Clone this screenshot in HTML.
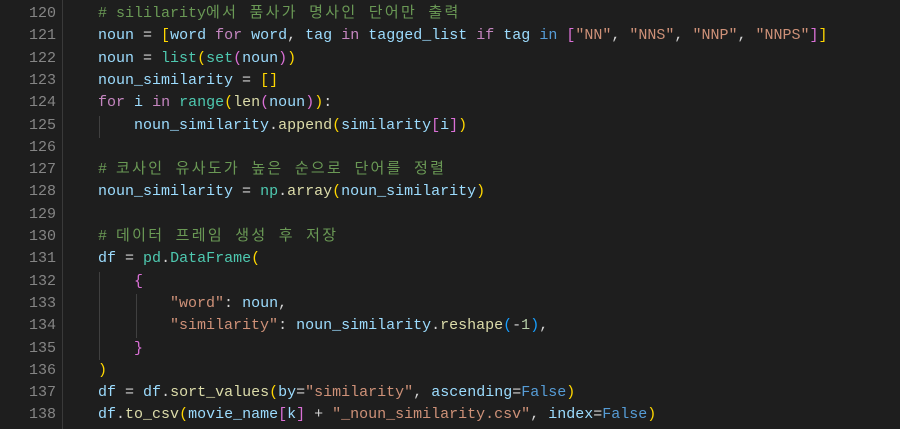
<!DOCTYPE html>
<html><head><meta charset="utf-8"><style>
body{margin:0;background:#1e1e1e;width:900px;height:429px;overflow:hidden;position:relative;font-family:"Liberation Mono","Noto Sans CJK KR",monospace;font-size:15px;}
.l{position:absolute;left:0;height:22px;line-height:22px;white-space:pre;color:#d4d4d4;}
.n{position:absolute;left:0;width:56px;text-align:right;color:#858585;}
.c{position:absolute;left:62px;}
.g{position:absolute;width:1px;background:#404040;}
.ko{letter-spacing:2.3px}
.v{color:#9cdcfe}.k{color:#c586c0}.f{color:#dcdcaa}.t{color:#4ec9b0}.s{color:#ce9178}.cm{color:#6a9955}.b1{color:#ffd700}.b2{color:#da70d6}.b3{color:#179fff}.bl{color:#569cd6}.nu{color:#b5cea8}
</style></head><body>
<div class="g" style="left:62px;top:0;height:429px;background:#3a3a3a"></div>
<div class="g" style="left:99px;top:116px;height:22px"></div>
<div class="g" style="left:99px;top:272px;height:88px"></div>
<div class="g" style="left:136px;top:294px;height:44px"></div>
<div class="l" style="top:3px"><span class="n">120</span><span class="c">    <span class="cm"># sililarity<span class="ko">에서 품사가 명사인 단어만 출력</span></span></span></div>
<div class="l" style="top:25.3px"><span class="n">121</span><span class="c">    <span class="v">noun</span> = <span class="b1">[</span><span class="v">word</span> <span class="k">for</span> <span class="v">word</span>, <span class="v">tag</span> <span class="k">in</span> <span class="v">tagged_list</span> <span class="k">if</span> <span class="v">tag</span> <span class="bl">in</span> <span class="b2">[</span><span class="s">"NN"</span>, <span class="s">"NNS"</span>, <span class="s">"NNP"</span>, <span class="s">"NNPS"</span><span class="b2">]</span><span class="b1">]</span></span></div>
<div class="l" style="top:47.6px"><span class="n">122</span><span class="c">    <span class="v">noun</span> = <span class="t">list</span><span class="b1">(</span><span class="t">set</span><span class="b2">(</span><span class="v">noun</span><span class="b2">)</span><span class="b1">)</span></span></div>
<div class="l" style="top:69.9px"><span class="n">123</span><span class="c">    <span class="v">noun_similarity</span> = <span class="b1">[]</span></span></div>
<div class="l" style="top:92.2px"><span class="n">124</span><span class="c">    <span class="k">for</span> <span class="v">i</span> <span class="k">in</span> <span class="t">range</span><span class="b1">(</span><span class="f">len</span><span class="b2">(</span><span class="v">noun</span><span class="b2">)</span><span class="b1">)</span>:</span></div>
<div class="l" style="top:114.5px"><span class="n">125</span><span class="c">        <span class="v">noun_similarity</span>.<span class="f">append</span><span class="b1">(</span><span class="v">similarity</span><span class="b2">[</span><span class="v">i</span><span class="b2">]</span><span class="b1">)</span></span></div>
<div class="l" style="top:136.8px"><span class="n">126</span></div>
<div class="l" style="top:159.1px"><span class="n">127</span><span class="c">    <span class="cm"># <span class="ko">코사인 유사도가 높은 순으로 단어를 정렬</span></span></span></div>
<div class="l" style="top:181.4px"><span class="n">128</span><span class="c">    <span class="v">noun_similarity</span> = <span class="t">np</span>.<span class="f">array</span><span class="b1">(</span><span class="v">noun_similarity</span><span class="b1">)</span></span></div>
<div class="l" style="top:203.7px"><span class="n">129</span></div>
<div class="l" style="top:226px"><span class="n">130</span><span class="c">    <span class="cm"># <span class="ko">데이터 프레임 생성 후 저장</span></span></span></div>
<div class="l" style="top:248.3px"><span class="n">131</span><span class="c">    <span class="v">df</span> = <span class="t">pd</span>.<span class="t">DataFrame</span><span class="b1">(</span></span></div>
<div class="l" style="top:270.6px"><span class="n">132</span><span class="c">        <span class="b2">{</span></span></div>
<div class="l" style="top:292.9px"><span class="n">133</span><span class="c">            <span class="s">"word"</span>: <span class="v">noun</span>,</span></div>
<div class="l" style="top:315.2px"><span class="n">134</span><span class="c">            <span class="s">"similarity"</span>: <span class="v">noun_similarity</span>.<span class="f">reshape</span><span class="b3">(</span>-<span class="nu">1</span><span class="b3">)</span>,</span></div>
<div class="l" style="top:337.5px"><span class="n">135</span><span class="c">        <span class="b2">}</span></span></div>
<div class="l" style="top:359.8px"><span class="n">136</span><span class="c">    <span class="b1">)</span></span></div>
<div class="l" style="top:382.1px"><span class="n">137</span><span class="c">    <span class="v">df</span> = <span class="v">df</span>.<span class="f">sort_values</span><span class="b1">(</span><span class="v">by</span>=<span class="s">"similarity"</span>, <span class="v">ascending</span>=<span class="bl">False</span><span class="b1">)</span></span></div>
<div class="l" style="top:404.4px"><span class="n">138</span><span class="c">    <span class="v">df</span>.<span class="f">to_csv</span><span class="b1">(</span><span class="v">movie_name</span><span class="b2">[</span><span class="v">k</span><span class="b2">]</span> + <span class="s">"_noun_similarity.csv"</span>, <span class="v">index</span>=<span class="bl">False</span><span class="b1">)</span></span></div>
</body></html>
